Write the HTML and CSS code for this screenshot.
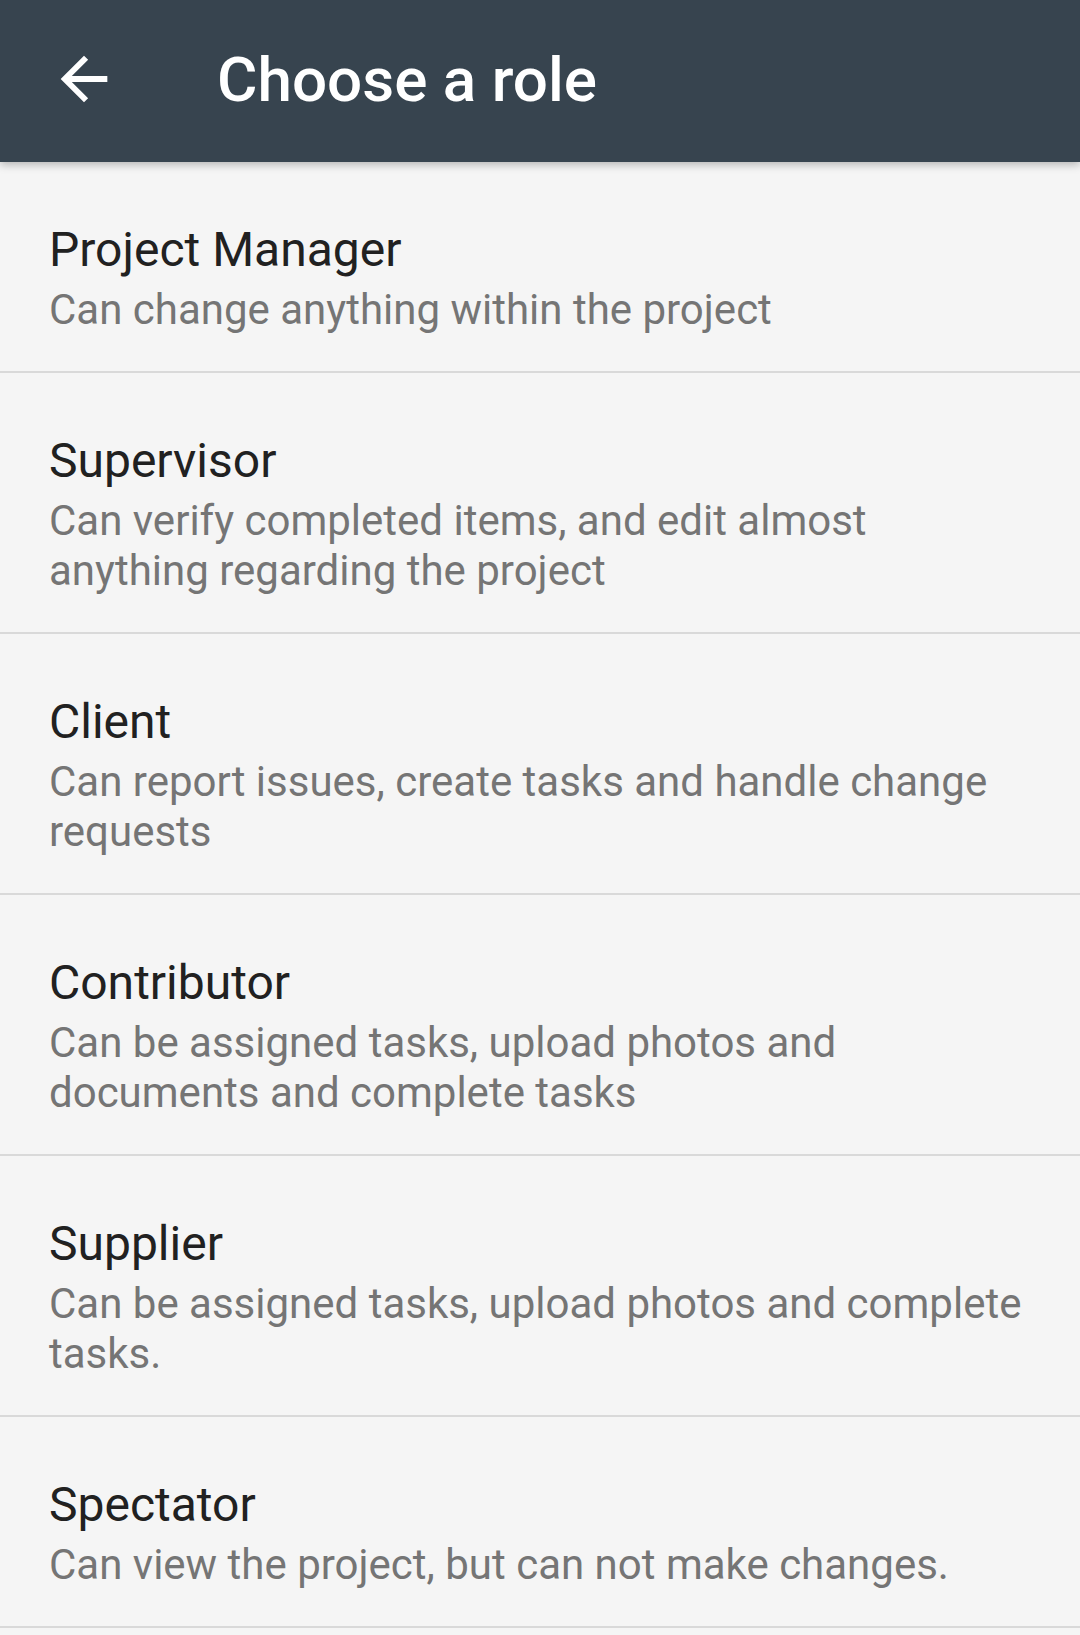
FILE: index.html
```html
<!DOCTYPE html>
<html lang="en">
<head>
    <meta charset="UTF-8">
    <meta name="viewport" content="width=device-width, initial-scale=1.0">
    <title>Choose a role</title>
    <link rel="stylesheet" href="styles.css">
</head>
<body>
    <header class="toolbar">
        <button class="back-btn" aria-label="Back">
            <svg viewBox="0 0 24 24" width="70" height="70">
                <path d="M20 11H7.83l5.59-5.59L12 4l-8 8 8 8 1.41-1.41L7.83 13H20v-2z" fill="#fff"/>
            </svg>
        </button>
        <h1>Choose a role</h1>
    </header>

    <ul class="role-list">
        <li class="role">
            <div class="role-name">Project Manager</div>
            <div class="role-desc">Can change anything within the project</div>
        </li>
        <li class="role">
            <div class="role-name">Supervisor</div>
            <div class="role-desc">Can verify completed items, and edit almost anything regarding the project</div>
        </li>
        <li class="role">
            <div class="role-name">Client</div>
            <div class="role-desc">Can report issues, create tasks and handle change requests</div>
        </li>
        <li class="role">
            <div class="role-name">Contributor</div>
            <div class="role-desc">Can be assigned tasks, upload photos and documents and complete tasks</div>
        </li>
        <li class="role">
            <div class="role-name">Supplier</div>
            <div class="role-desc">Can be assigned tasks, upload photos and complete tasks.</div>
        </li>
        <li class="role">
            <div class="role-name">Spectator</div>
            <div class="role-desc">Can view the project, but can not make changes.</div>
        </li>
    </ul>
</body>
</html>
```

FILE: styles.css
```css
body {
    margin: 0;
    padding: 0;
    font-family: Roboto, "Noto Sans", sans-serif;
    background: #f5f5f5;
    color: #212121;
}

/* Toolbar */
.toolbar {
    position: relative;
    z-index: 1;
    display: flex;
    align-items: center;
    height: 162px;
    background-color: #37444f;
    box-shadow: 0 3px 8px rgba(0, 0, 0, 0.25);
}

.back-btn {
    display: flex;
    padding: 0;
    margin-left: 49px;
    margin-top: -4px;
    border: none;
    background: transparent;
    cursor: pointer;
}

.toolbar h1 {
    margin: 0 0 0 98px;
    font-size: 62px;
    font-weight: 500;
    color: white;
    margin-top: -4px;
}

/* Role list */
.role-list {
    list-style: none;
    margin: 0;
    padding: 0;
}

.role {
    padding: 60px 52px 36px 49px;
    border-bottom: 2px solid #d9d9d9;
}

.role-name {
    font-size: 48px;
    line-height: 56px;
    margin-bottom: 7px;
    color: #212121;
}

.role-desc {
    font-size: 42px;
    line-height: 50px;
    color: #757575;
}
```
